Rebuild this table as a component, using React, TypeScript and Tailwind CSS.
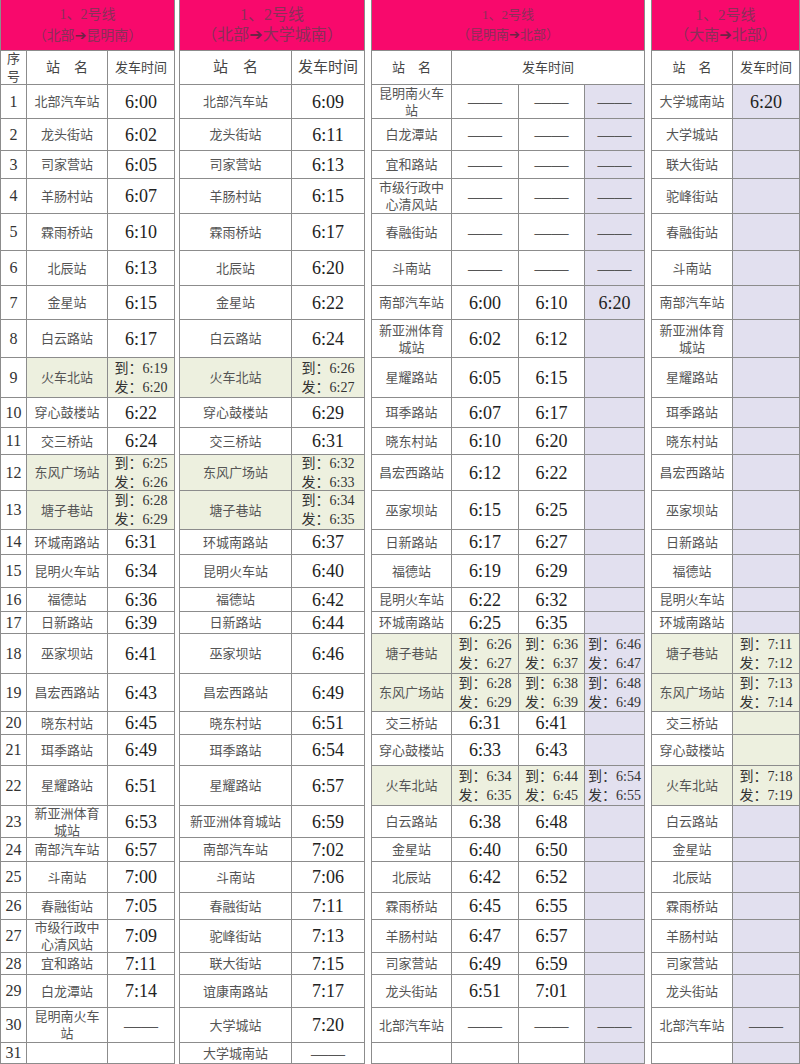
import React from 'react';

type T = string | [string, string];

const FONT = "'Liberation Serif','Noto Sans CJK SC',serif";

const S1st = ['北部汽车站','龙头街站','司家营站','羊肠村站','霖雨桥站','北辰站','金星站','白云路站','火车北站','穿心鼓楼站','交三桥站','东风广场站','塘子巷站','环城南路站','昆明火车站','福德站','日新路站','巫家坝站','昌宏西路站','晓东村站','珥季路站','星耀路站','新亚洲体育城站','南部汽车站','斗南站','春融街站','市级行政中心清风站','宜和路站','白龙潭站','昆明南火车站',''];
const S1t: T[] = ['6:00','6:02','6:05','6:07','6:10','6:13','6:15','6:17',['6:19','6:20'],'6:22','6:24',['6:25','6:26'],['6:28','6:29'],'6:31','6:34','6:36','6:39','6:41','6:43','6:45','6:49','6:51','6:53','6:57','7:00','7:05','7:09','7:11','7:14','-',''];

const S2st = ['北部汽车站','龙头街站','司家营站','羊肠村站','霖雨桥站','北辰站','金星站','白云路站','火车北站','穿心鼓楼站','交三桥站','东风广场站','塘子巷站','环城南路站','昆明火车站','福德站','日新路站','巫家坝站','昌宏西路站','晓东村站','珥季路站','星耀路站','新亚洲体育城站','南部汽车站','斗南站','春融街站','驼峰街站','联大街站','谊康南路站','大学城站','大学城南站'];
const S2t: T[] = ['6:09','6:11','6:13','6:15','6:17','6:20','6:22','6:24',['6:26','6:27'],'6:29','6:31',['6:32','6:33'],['6:34','6:35'],'6:37','6:40','6:42','6:44','6:46','6:49','6:51','6:54','6:57','6:59','7:02','7:06','7:11','7:13','7:15','7:17','7:20','-'];

const S3st = ['昆明南火车站','白龙潭站','宜和路站','市级行政中心清风站','春融街站','斗南站','南部汽车站','新亚洲体育城站','星耀路站','珥季路站','晓东村站','昌宏西路站','巫家坝站','日新路站','福德站','昆明火车站','环城南路站','塘子巷站','东风广场站','交三桥站','穿心鼓楼站','火车北站','白云路站','金星站','北辰站','霖雨桥站','羊肠村站','司家营站','龙头街站','北部汽车站',''];
const S3a: T[] = ['-','-','-','-','-','-','6:00','6:02','6:05','6:07','6:10','6:12','6:15','6:17','6:19','6:22','6:25',['6:26','6:27'],['6:28','6:29'],'6:31','6:33',['6:34','6:35'],'6:38','6:40','6:42','6:45','6:47','6:49','6:51','-',''];
const S3b: T[] = ['-','-','-','-','-','-','6:10','6:12','6:15','6:17','6:20','6:22','6:25','6:27','6:29','6:32','6:35',['6:36','6:37'],['6:38','6:39'],'6:41','6:43',['6:44','6:45'],'6:48','6:50','6:52','6:55','6:57','6:59','7:01','-',''];
const S3c: T[] = ['-','-','-','-','-','-','6:20','','','','','','','','','','',['6:46','6:47'],['6:48','6:49'],'','',['6:54','6:55'],'','','','','','','','-',''];

const S4st = ['大学城南站','大学城站','联大街站','驼峰街站','春融街站','斗南站','南部汽车站','新亚洲体育城站','星耀路站','珥季路站','晓东村站','昌宏西路站','巫家坝站','日新路站','福德站','昆明火车站','环城南路站','塘子巷站','东风广场站','交三桥站','穿心鼓楼站','火车北站','白云路站','金星站','北辰站','霖雨桥站','羊肠村站','司家营站','龙头街站','北部汽车站',''];
const S4t: T[] = ['6:20','','','','','','','','','','','','','','','','',['7:11','7:12'],['7:13','7:14'],'','',['7:18','7:19'],'','','','','','','','-',''];

const GREEN = 'bg-[#edf0df]';
const LAV = 'bg-[#e2e0ef]';
const WHITE = 'bg-white';

const cell = 'flex items-center justify-center text-center border-r border-b border-[#8c8c8c] overflow-hidden';

function Time({ v }: { v: T }) {
  if (Array.isArray(v)) {
    return (
      <div className="text-[14px] leading-[19px] text-[#333]">
        <div>到：{v[0]}</div>
        <div>发：{v[1]}</div>
      </div>
    );
  }
  if (v === '-') return <span className="text-[17px] text-[#555] leading-none">——</span>;
  return <span className="text-[18px] text-[#222] leading-none">{v}</span>;
}

function Station({ name, bg }: { name: string; bg: string }) {
  return (
    <div className={`${cell} ${bg} px-[6px]`}>
      <span className="text-[13px] leading-[17px] text-[#555]">{name}</span>
    </div>
  );
}

function TimeCell({ v, bg }: { v: T; bg: string }) {
  return (
    <div className={`${cell} ${bg} px-[2px]`}>
      <Time v={v} />
    </div>
  );
}

function Header({ title, size, span }: { title: string; size: string; span: string }) {
  return (
    <div className={`${span} bg-[#f8096c] border-r border-b border-[#8c8c8c] flex flex-col items-center justify-center text-[#8a2f58] ${size} leading-[20px]`}>
      <div>1、2号线</div>
      <div>
        （{title.split('>')[0]}
        <span className="font-bold text-[#6e2346]" style={{ fontFamily: "'DejaVu Sans',sans-serif" }}>➔</span>
        {title.split('>')[1]}）
      </div>
    </div>
  );
}

export default function App() {
  const rows = Array.from({ length: 31 }, (_, i) => i);
  return (
    <div className="w-[800px] h-[1064px] overflow-hidden bg-white" style={{ fontFamily: FONT }}>
      <div className="grid grid-cols-[27px_81px_67px_5px_112px_73px_7px_80px_67px_66px_60px_7px_81px_67px] grid-rows-[51px_34px_34px_32px_28px_35px_37px_35px_34px_38px_40px_30px_27px_36px_39px_25px_33px_24px_22px_40px_38px_23px_31px_40px_32px_24px_31px_27px_33px_22px_33px_35px_21px]">
        <div className="col-start-4 row-span-full border-r border-[#8c8c8c] bg-white" />
        <div className="col-start-7 row-span-full border-r border-[#8c8c8c] bg-white" />
        <div className="col-start-12 row-span-full border-r border-[#8c8c8c] bg-white" />

        <Header title="北部>昆明南" size="text-[14px]" span="col-span-3 border-l" />
        <Header title="北部>大学城南" size="text-[16px]" span="col-span-2" />
        <Header title="昆明南>北部" size="text-[13px]" span="col-span-4" />
        <Header title="大南>北部" size="text-[15px]" span="col-span-2" />

        <div className={`${cell} border-l flex-col text-[13px] leading-[18px] text-[#444]`}>
          <div>序</div>
          <div>号</div>
        </div>
        <div className={`${cell} text-[14px] text-[#444]`}>站　名</div>
        <div className={`${cell} text-[13px] text-[#444]`}>发车时间</div>
        <div className={`${cell} text-[15px] text-[#444]`}>站　名</div>
        <div className={`${cell} text-[15px] text-[#444]`}>发车时间</div>
        <div className={`${cell} text-[13px] text-[#444]`}>站　名</div>
        <div className={`${cell} col-span-3 text-[13px] text-[#444]`}>发车时间</div>
        <div className={`${cell} text-[13px] text-[#444]`}>站　名</div>
        <div className={`${cell} text-[13px] text-[#444]`}>发车时间</div>

        {rows.map((i) => {
          const g1 = Array.isArray(S1t[i]);
          const g2 = Array.isArray(S2t[i]);
          const g3 = Array.isArray(S3a[i]);
          const g4 = Array.isArray(S4t[i]);
          const t4bg = i >= 17 && i <= 21 ? GREEN : LAV;
          return (
            <React.Fragment key={i}>
              <div className={`${cell} border-l text-[16px] text-[#333]`}>{i + 1}</div>
              <Station name={S1st[i]} bg={g1 ? GREEN : WHITE} />
              <TimeCell v={S1t[i]} bg={g1 ? GREEN : WHITE} />
              <Station name={S2st[i]} bg={g2 ? GREEN : WHITE} />
              <TimeCell v={S2t[i]} bg={g2 ? GREEN : WHITE} />
              <Station name={S3st[i]} bg={g3 ? GREEN : WHITE} />
              <TimeCell v={S3a[i]} bg={g3 ? GREEN : WHITE} />
              <TimeCell v={S3b[i]} bg={g3 ? GREEN : WHITE} />
              <TimeCell v={S3c[i]} bg={LAV} />
              <Station name={S4st[i]} bg={g4 ? GREEN : WHITE} />
              <TimeCell v={S4t[i]} bg={t4bg} />
            </React.Fragment>
          );
        })}
      </div>
    </div>
  );
}
